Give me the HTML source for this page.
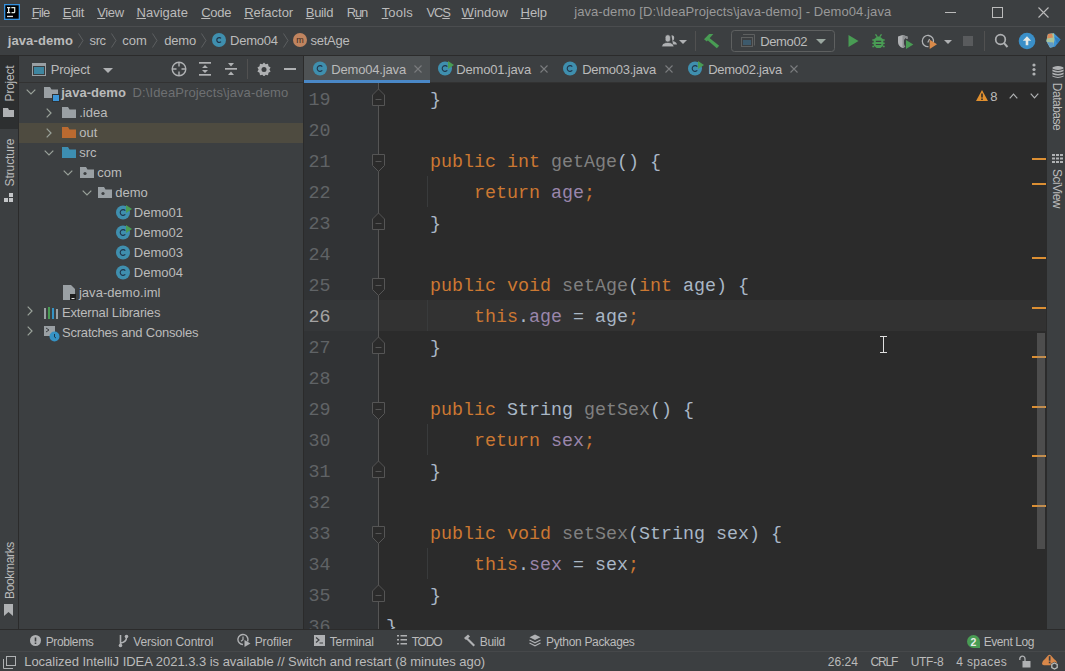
<!DOCTYPE html>
<html><head><meta charset="utf-8">
<style>
*{margin:0;padding:0;box-sizing:border-box}
html,body{width:1065px;height:671px;overflow:hidden;background:#3c3f41;font-family:"Liberation Sans",sans-serif;font-size:13px;color:#bbbbbb;position:relative}
.a{position:absolute;white-space:pre}
.r{position:absolute;display:block}
.mono{font-family:"Liberation Mono",monospace}
u{text-decoration:underline;text-decoration-thickness:1px;text-underline-offset:1px}
</style></head><body>
<div class="r" style="left:0px;top:0px;width:1065px;height:26px;background:#3c3f41;"></div>
<div class="r" style="left:0px;top:26px;width:1065px;height:1px;background:#4b4d4f;"></div>
<div class="r" style="left:0px;top:27px;width:1065px;height:28px;background:#3c3f41;"></div>
<div class="r" style="left:0px;top:55px;width:1065px;height:1px;background:#2b2b2b;"></div>
<div class="r" style="left:0px;top:56px;width:18px;height:573px;background:#3c3f41;"></div>
<div class="r" style="left:0px;top:56px;width:18px;height:73px;background:#2d2f30;"></div>
<div class="r" style="left:18px;top:56px;width:1px;height:573px;background:#2b2b2b;"></div>
<div class="r" style="left:19px;top:56px;width:284px;height:573px;background:#3c3f41;"></div>
<div class="r" style="left:19px;top:82px;width:284px;height:1px;background:#323232;"></div>
<div class="r" style="left:303px;top:56px;width:1px;height:573px;background:#2b2b2b;"></div>
<div class="r" style="left:304px;top:56px;width:742px;height:27px;background:#3c3f41;"></div>
<div class="r" style="left:304px;top:56px;width:126px;height:24px;background:#4e5254;"></div>
<div class="r" style="left:304px;top:80px;width:126px;height:3px;background:#4a88c7;"></div>
<div class="r" style="left:430px;top:82px;width:616px;height:1px;background:#323232;"></div>
<div class="r" style="left:304px;top:83px;width:742px;height:546px;background:#2b2b2b;"></div>
<div class="r" style="left:304px;top:83px;width:74px;height:546px;background:#313335;"></div>
<div class="r" style="left:1046px;top:56px;width:19px;height:573px;background:#3c3f41;"></div>
<div class="r" style="left:1046px;top:56px;width:1px;height:573px;background:#2b2b2b;"></div>
<div class="r" style="left:0px;top:629px;width:1065px;height:1px;background:#2b2b2b;"></div>
<div class="r" style="left:0px;top:630px;width:1065px;height:21px;background:#3c3f41;"></div>
<div class="r" style="left:0px;top:651px;width:1065px;height:1px;background:#46484a;"></div>
<div class="r" style="left:0px;top:652px;width:1065px;height:19px;background:#3c3f41;"></div>
<svg class="r" style="left:4px;top:4px;" width="16" height="16" viewBox="0 0 16 16"><rect x="0.65" y="0.65" width="14.7" height="14.7" fill="#000" stroke="#3592e0" stroke-width="1.3"/><path d="M3 3 H6.3 V4.2 H5.3 V8 H6.3 V9.2 H3 V8 H4 V4.2 H3Z" fill="#e8ece8"/><path d="M7.3 3 H11.3 V8 Q11.3 9.2 10 9.2 H7.5 V8 H9.8 Q10.1 8 10.1 7.6 V4.2 H7.3Z" fill="#dfe8df"/><rect x="3" y="11.8" width="6" height="1.3" fill="#e0e0e0"/></svg>
<div class="a" style="left:31.70px;top:4.00px;font-size:13px;line-height:17px;color:#bbbbbb;letter-spacing:-0.816px;"><u>F</u>ile</div>
<div class="a" style="left:62.70px;top:4.00px;font-size:13px;line-height:17px;color:#bbbbbb;letter-spacing:-0.234px;"><u>E</u>dit</div>
<div class="a" style="left:97.20px;top:4.00px;font-size:13px;line-height:17px;color:#bbbbbb;letter-spacing:-0.347px;"><u>V</u>iew</div>
<div class="a" style="left:136.50px;top:4.00px;font-size:13px;line-height:17px;color:#bbbbbb;letter-spacing:0.013px;"><u>N</u>avigate</div>
<div class="a" style="left:201.20px;top:4.00px;font-size:13px;line-height:17px;color:#bbbbbb;letter-spacing:-0.226px;"><u>C</u>ode</div>
<div class="a" style="left:244.20px;top:4.00px;font-size:13px;line-height:17px;color:#bbbbbb;letter-spacing:-0.019px;"><u>R</u>efactor</div>
<div class="a" style="left:305.80px;top:4.00px;font-size:13px;line-height:17px;color:#bbbbbb;letter-spacing:-0.327px;"><u>B</u>uild</div>
<div class="a" style="left:346.80px;top:4.00px;font-size:13px;line-height:17px;color:#bbbbbb;letter-spacing:-1.200px;">R<u>u</u>n</div>
<div class="a" style="left:381.70px;top:4.00px;font-size:13px;line-height:17px;color:#bbbbbb;letter-spacing:0.163px;"><u>T</u>ools</div>
<div class="a" style="left:426.60px;top:4.00px;font-size:13px;line-height:17px;color:#bbbbbb;letter-spacing:-1.200px;">VC<u>S</u></div>
<div class="a" style="left:461.60px;top:4.00px;font-size:13px;line-height:17px;color:#bbbbbb;letter-spacing:0.013px;"><u>W</u>indow</div>
<div class="a" style="left:520.60px;top:4.00px;font-size:13px;line-height:17px;color:#bbbbbb;letter-spacing:-0.112px;"><u>H</u>elp</div>
<div class="a" style="left:574.20px;top:2.50px;font-size:13px;line-height:17px;color:#999999;letter-spacing:0.083px;">java-demo [D:\IdeaProjects\java-demo] - Demo04.java</div>
<div class="r" style="left:945px;top:12px;width:11px;height:1px;background:#bbbbbb;"></div>
<svg class="r" style="left:991px;top:6px;" width="12" height="12" viewBox="0 0 12 12"><rect x="1.5" y="1.5" width="10" height="10" fill="none" stroke="#bbbbbb" stroke-width="1"/></svg>
<svg class="r" style="left:1037px;top:6px;" width="13" height="13" viewBox="0 0 13 13"><path d="M1.5 1.5 L11.5 11.5 M11.5 1.5 L1.5 11.5" stroke="#bbbbbb" stroke-width="1.1"/></svg>
<div class="a" style="left:7.70px;top:32.00px;font-size:13px;line-height:17px;color:#bbbbbb;letter-spacing:0.113px;font-weight:bold;">java-demo</div>
<div class="a" style="left:89.60px;top:32.00px;font-size:13px;line-height:17px;color:#bbbbbb;letter-spacing:-0.464px;">src</div>
<div class="a" style="left:122.20px;top:32.00px;font-size:13px;line-height:17px;color:#bbbbbb;letter-spacing:0.071px;">com</div>
<div class="a" style="left:164.20px;top:32.00px;font-size:13px;line-height:17px;color:#bbbbbb;letter-spacing:-0.173px;">demo</div>
<div class="a" style="left:230.00px;top:32.00px;font-size:13px;line-height:17px;color:#bbbbbb;letter-spacing:-0.207px;">Demo04</div>
<div class="a" style="left:310.40px;top:32.00px;font-size:13px;line-height:17px;color:#bbbbbb;letter-spacing:-0.234px;">setAge</div>
<svg class="r" style="left:78px;top:33px;" width="6" height="15" viewBox="0 0 6 15"><path d="M0.5 0.5 L5 7.5 L0.5 14.5" fill="none" stroke="#5d5f61" stroke-width="1"/></svg>
<svg class="r" style="left:111px;top:33px;" width="6" height="15" viewBox="0 0 6 15"><path d="M0.5 0.5 L5 7.5 L0.5 14.5" fill="none" stroke="#5d5f61" stroke-width="1"/></svg>
<svg class="r" style="left:152px;top:33px;" width="6" height="15" viewBox="0 0 6 15"><path d="M0.5 0.5 L5 7.5 L0.5 14.5" fill="none" stroke="#5d5f61" stroke-width="1"/></svg>
<svg class="r" style="left:201px;top:33px;" width="6" height="15" viewBox="0 0 6 15"><path d="M0.5 0.5 L5 7.5 L0.5 14.5" fill="none" stroke="#5d5f61" stroke-width="1"/></svg>
<svg class="r" style="left:283px;top:33px;" width="6" height="15" viewBox="0 0 6 15"><path d="M0.5 0.5 L5 7.5 L0.5 14.5" fill="none" stroke="#5d5f61" stroke-width="1"/></svg>
<svg class="r" style="left:212px;top:33px;" width="14" height="14" viewBox="0 0 14 14"><circle cx="7" cy="7" r="7" fill="#3f8fae"/><path d="M9 5.4 A2.4 2.4 0 1 0 9 8.6" fill="none" stroke="#1f3349" stroke-width="1.2"/></svg>
<svg class="r" style="left:293px;top:33px;" width="14" height="14" viewBox="0 0 14 14"><circle cx="7" cy="7" r="7" fill="#c0845f"/><text x="7" y="10" text-anchor="middle" font-family="Liberation Sans" font-size="9" fill="#3a2a20">m</text></svg>
<svg class="r" style="left:661px;top:34px;" width="17" height="14" viewBox="0 0 17 14"><path d="M10.5 1.2 Q13.2 1 13.2 4 Q13.2 6.5 11.5 7 Q15.5 7.5 16 10.5 L12 10.5Z" fill="#afb1b3"/><rect x="4.2" y="0.8" width="5.2" height="7.2" rx="2.5" fill="#afb1b3" stroke="#3c3f41" stroke-width="0.6"/><path d="M0.8 12.8 Q0.8 8.6 6.8 8.4 Q12.8 8.6 12.8 12.8Z" fill="#afb1b3" stroke="#3c3f41" stroke-width="0.6"/></svg>
<svg class="r" style="left:679px;top:40px;" width="8" height="4" viewBox="0 0 8 4"><path d="M0 0 L8 0 L4 4Z" fill="#afb1b3"/></svg>
<div class="r" style="left:695px;top:31px;width:1px;height:20px;background:#515151;"></div>
<svg class="r" style="left:704px;top:33px;" width="16" height="16" viewBox="0 0 16 16"><path d="M0 6.3 L5.2 1 L9.3 1 L2.8 8.5Z" fill="#499c54"/><path d="M4.5 4.3 L15.2 12.8 L12.8 15.3 L2.8 6.5Z" fill="#499c54"/></svg>
<svg class="r" style="left:731px;top:30px;" width="104" height="22" viewBox="0 0 104 22"><rect x="0.5" y="0.5" width="103" height="21" rx="3" fill="none" stroke="#5e6060"/></svg>
<svg class="r" style="left:740px;top:33px;" width="16" height="15" viewBox="0 0 16 15"><path d="M3 1.5 H14.5 V12.5" fill="none" stroke="#5e6060" stroke-width="1"/><rect x="1.5" y="4.5" width="11" height="9" fill="none" stroke="#5e6060" stroke-width="1"/><rect x="3" y="7" width="8" height="5" fill="#3d5a6c"/></svg>
<div class="a" style="left:760.20px;top:33.00px;font-size:13px;line-height:17px;color:#bbbbbb;letter-spacing:-0.347px;">Demo02</div>
<svg class="r" style="left:816px;top:39px;" width="10" height="5" viewBox="0 0 10 5"><path d="M0 0 L10 0 L5 5Z" fill="#9aa7a0"/></svg>
<svg class="r" style="left:848px;top:35px;" width="11" height="12" viewBox="0 0 11 12"><path d="M0.5 0 L10.5 6 L0.5 12Z" fill="#499c54"/></svg>
<svg class="r" style="left:872px;top:34px;" width="14" height="15" viewBox="0 0 14 15"><path d="M3.5 0.3 L5.3 2.8 M9.5 0.3 L7.7 2.8" stroke="#499c54" stroke-width="1.3"/><path d="M4 3.5 Q6.5 1.5 9 3.5 L11.3 5.5 L11.3 11.5 L8.5 14 L4.5 14 L1.7 11.5 L1.7 5.5Z" fill="#499c54"/><path d="M0.3 6 H2 M11 6 H12.7 M0.3 9.3 H2 M11 9.3 H12.7 M0.3 12.5 H2.2 M10.8 12.5 H12.7" stroke="#499c54" stroke-width="1.4"/><path d="M3.8 7.3 H9.2 M3.8 10.5 H9.2" stroke="#3c3f41" stroke-width="1.2"/></svg>
<svg class="r" style="left:897px;top:35px;" width="17" height="15" viewBox="0 0 17 15"><path d="M1 1.5 L5.5 0 L10.5 1.5 L10.5 4 L8.3 3 Q7 3.6 7 5.5 L7 9 Q7 11 8.3 11.5 Q7 12.5 5.5 13 Q1 11 1 7Z" fill="#afb1b3"/><path d="M5.5 0 L10.5 1.5 L10.5 4 L8.3 3 Q7 3.6 7 5.5 L7 9 Q7 11 8.3 11.5 Q7 12.5 5.5 13Z" fill="#8c8f91"/><path d="M9 5 L16.3 9.5 L9 14Z" fill="#499c54"/></svg>
<svg class="r" style="left:921px;top:34px;" width="17" height="16" viewBox="0 0 17 16"><path d="M12.3 8.5 A5.6 5.6 0 1 0 7.5 12.6" fill="none" stroke="#afb1b3" stroke-width="1.3"/><path d="M6.8 8.6 L8.6 5" fill="none" stroke="#afb1b3" stroke-width="1.2"/><path d="M8.7 5.8 L16 10.3 L8.7 15Z" fill="#d98a4a"/></svg>
<svg class="r" style="left:944px;top:40px;" width="8" height="4" viewBox="0 0 8 4"><path d="M0 0 L8 0 L4 4Z" fill="#afb1b3"/></svg>
<div class="r" style="left:963px;top:36px;width:10px;height:10px;background:#595b5d;"></div>
<div class="r" style="left:984px;top:31px;width:1px;height:20px;background:#515151;"></div>
<svg class="r" style="left:993px;top:33px;" width="16" height="16" viewBox="0 0 16 16"><circle cx="7.5" cy="6.5" r="4.8" fill="none" stroke="#afb1b3" stroke-width="1.7"/><path d="M10.8 9.8 L14.5 14" stroke="#afb1b3" stroke-width="2"/></svg>
<svg class="r" style="left:1018px;top:32px;" width="18" height="18" viewBox="0 0 18 18"><circle cx="9" cy="9" r="8.3" fill="#3a8fc8"/><path d="M9 4.3 L13.2 8.8 L10.3 8.8 L10.3 13.3 L7.7 13.3 L7.7 8.8 L4.8 8.8Z" fill="#e4e8e4"/></svg>
<svg class="r" style="left:1046px;top:33px;" width="15" height="16" viewBox="0 0 15 16"><path d="M2 1 L8 0.3 L14.5 6.5 L9 13.8 L4 14.5 L0.3 8Z" fill="#3d93d6"/><path d="M2 1 L8 0.3 L8.5 7 L7 13.9 L4 14.5 L0.3 8Z" fill="#a9c49a"/><path d="M2 1 L6 0.6 L7 4.5 L1 5.5Z" fill="#d98a5a"/><path d="M1 9 L7.5 9.5 L7 13.9 L4 14.5Z" fill="#5f9bc8"/><path d="M8.5 4 L14.5 6.5 L11 11Z" fill="#2f7fc0"/></svg>
<div class="a" style="left:-190.5px;top:75.50px;width:400px;text-align:center;font-size:12px;line-height:15px;color:#bbbbbb;letter-spacing:-0.225px;transform:rotate(-90deg);transform-origin:200px 7.5px">Project</div>
<svg class="r" style="left:3px;top:108px;" width="11" height="9" viewBox="0 0 11 9"><path d="M0 0 L5 0 L6 2 L11 2 L11 9 L0 9Z" fill="#afb1b3"/></svg>
<div class="a" style="left:-190.5px;top:154.50px;width:400px;text-align:center;font-size:12px;line-height:15px;color:#bbbbbb;letter-spacing:-0.086px;transform:rotate(-90deg);transform-origin:200px 7.5px">Structure</div>
<svg class="r" style="left:4px;top:193px;" width="10" height="10" viewBox="0 0 10 10"><rect x="5" y="0" width="4" height="4" fill="#c4c6c8"/><rect x="0" y="5" width="4" height="4" fill="#c4c6c8"/><rect x="5" y="5" width="4" height="4" fill="#c4c6c8"/></svg>
<div class="a" style="left:-190.5px;top:562.65px;width:400px;text-align:center;font-size:12px;line-height:15px;color:#bbbbbb;letter-spacing:-0.340px;transform:rotate(-90deg);transform-origin:200px 7.5px">Bookmarks</div>
<svg class="r" style="left:4px;top:604px;" width="10" height="12" viewBox="0 0 10 12"><path d="M0 0 L9 0 L9 12 L4.5 8 L0 12Z" fill="#afb1b3"/></svg>
<svg class="r" style="left:32px;top:63px;" width="15" height="14" viewBox="0 0 15 14"><rect x="0.5" y="0.5" width="13" height="12" fill="none" stroke="#9aa0a4"/><rect x="0" y="0" width="14" height="3" fill="#9aa0a4"/><rect x="2" y="4" width="10" height="7" fill="#3e86a0"/></svg>
<div class="a" style="left:50.70px;top:60.70px;font-size:13px;line-height:17px;color:#bbbbbb;letter-spacing:-0.177px;">Project</div>
<svg class="r" style="left:103px;top:68px;" width="10" height="5" viewBox="0 0 10 5"><path d="M0 0 L10 0 L5 5Z" fill="#afb1b3"/></svg>
<svg class="r" style="left:171px;top:61px;" width="16" height="16" viewBox="0 0 16 16"><circle cx="8" cy="8" r="6.8" fill="none" stroke="#afb1b3" stroke-width="1.4"/><path d="M8 1 L8 5.5 M8 10.5 L8 15 M1 8 L5.5 8 M10.5 8 L15 8" stroke="#afb1b3" stroke-width="1.4"/></svg>
<svg class="r" style="left:199px;top:62px;" width="12" height="14" viewBox="0 0 12 14"><rect x="0" y="0" width="12" height="1.7" fill="#afb1b3"/><rect x="0" y="12" width="12" height="1.7" fill="#afb1b3"/><path d="M3 6 L6 3 L9 6Z M3 8 L9 8 L6 11Z" fill="#afb1b3"/></svg>
<svg class="r" style="left:225px;top:62px;" width="12" height="14" viewBox="0 0 12 14"><rect x="0" y="6" width="12" height="1.7" fill="#afb1b3"/><path d="M3 1 L9 1 L6 4.5Z M3 13 L6 9.5 L9 13Z" fill="#afb1b3"/></svg>
<div class="r" style="left:247px;top:59px;width:1px;height:20px;background:#515151;"></div>
<svg class="r" style="left:257px;top:62px;" width="14" height="14" viewBox="0 0 14 14"><path d="M7 0.5 L8.6 2.2 L11 1.7 L11.5 4.2 L13.6 5.5 L12.4 7.5 L13.6 9.5 L11.5 10.8 L11 13.3 L8.6 12.8 L7 14.5 L5.4 12.8 L3 13.3 L2.5 10.8 L0.4 9.5 L1.6 7.5 L0.4 5.5 L2.5 4.2 L3 1.7 L5.4 2.2Z" fill="#afb1b3"/><circle cx="7" cy="7.5" r="2.5" fill="#3c3f41"/></svg>
<div class="r" style="left:284px;top:68px;width:12px;height:2px;background:#afb1b3;"></div>
<div class="r" style="left:19px;top:123px;width:284px;height:20px;background:#4e4b40;"></div>
<svg class="r" style="left:26px;top:89px;" width="10" height="6" viewBox="0 0 10 6"><path d="M0.7 0.7 L5 5 L9.3 0.7" fill="none" stroke="#9aa29a" stroke-width="1.2"/></svg>
<svg class="r" style="left:44px;top:87px;" width="16" height="15" viewBox="0 0 16 15"><path d="M0 0 L6 0 L7.5 2.5 L14 2.5 L14 11 L0 11Z" fill="#9aa0a4"/><rect x="8.5" y="7.5" width="7" height="7" fill="#3d96d8" stroke="#2f3133" stroke-width="1"/></svg>
<div class="a" style="left:61.20px;top:84.00px;font-size:13px;line-height:17px;color:#bbbbbb;letter-spacing:0.050px;font-weight:bold;">java-demo</div>
<div class="a" style="left:132.60px;top:84.00px;font-size:13px;line-height:17px;color:#6e7072;letter-spacing:0.101px;">D:\IdeaProjects\java-demo</div>
<svg class="r" style="left:46px;top:108px;" width="6" height="10" viewBox="0 0 6 10"><path d="M0.7 0.7 L5 5 L0.7 9.3" fill="none" stroke="#9aa29a" stroke-width="1.2"/></svg>
<svg class="r" style="left:62px;top:107px;" width="14" height="11" viewBox="0 0 14 11"><path d="M0 0 L6 0 L7.5 2.5 L14 2.5 L14 11 L0 11Z" fill="#9aa0a4"/></svg>
<div class="a" style="left:79.20px;top:104.00px;font-size:13px;line-height:17px;color:#bbbbbb;letter-spacing:0.000px;">.idea</div>
<svg class="r" style="left:46px;top:128px;" width="6" height="10" viewBox="0 0 6 10"><path d="M0.7 0.7 L5 5 L0.7 9.3" fill="none" stroke="#9aa29a" stroke-width="1.2"/></svg>
<svg class="r" style="left:62px;top:127px;" width="14" height="11" viewBox="0 0 14 11"><path d="M0 0 L6 0 L7.5 2.5 L14 2.5 L14 11 L0 11Z" fill="#bb6a30"/></svg>
<div class="a" style="left:79.20px;top:124.00px;font-size:13px;line-height:17px;color:#bbbbbb;letter-spacing:0.000px;">out</div>
<svg class="r" style="left:44px;top:150px;" width="10" height="6" viewBox="0 0 10 6"><path d="M0.7 0.7 L5 5 L9.3 0.7" fill="none" stroke="#9aa29a" stroke-width="1.2"/></svg>
<svg class="r" style="left:62px;top:147px;" width="14" height="11" viewBox="0 0 14 11"><path d="M0 0 L6 0 L7.5 2.5 L14 2.5 L14 11 L0 11Z" fill="#3d8eb1"/></svg>
<div class="a" style="left:79.20px;top:144.00px;font-size:13px;line-height:17px;color:#bbbbbb;letter-spacing:0.000px;">src</div>
<svg class="r" style="left:63px;top:170px;" width="10" height="6" viewBox="0 0 10 6"><path d="M0.7 0.7 L5 5 L9.3 0.7" fill="none" stroke="#9aa29a" stroke-width="1.2"/></svg>
<svg class="r" style="left:80px;top:167px;" width="14" height="11" viewBox="0 0 14 11"><path d="M0 0 L6 0 L7.5 2.5 L14 2.5 L14 11 L0 11Z" fill="#9aa0a4"/><circle cx="5" cy="6.5" r="1.6" fill="#3c3f41"/></svg>
<div class="a" style="left:97.20px;top:164.00px;font-size:13px;line-height:17px;color:#bbbbbb;letter-spacing:0.000px;">com</div>
<svg class="r" style="left:82px;top:190px;" width="10" height="6" viewBox="0 0 10 6"><path d="M0.7 0.7 L5 5 L9.3 0.7" fill="none" stroke="#9aa29a" stroke-width="1.2"/></svg>
<svg class="r" style="left:98px;top:187px;" width="14" height="11" viewBox="0 0 14 11"><path d="M0 0 L6 0 L7.5 2.5 L14 2.5 L14 11 L0 11Z" fill="#9aa0a4"/><circle cx="5" cy="6.5" r="1.6" fill="#3c3f41"/></svg>
<div class="a" style="left:115.20px;top:184.00px;font-size:13px;line-height:17px;color:#bbbbbb;letter-spacing:0.000px;">demo</div>
<svg class="r" style="left:116px;top:205px;" width="16" height="15" viewBox="0 0 16 15"><circle cx="7" cy="7.5" r="7" fill="#3f8fae"/><path d="M9.3 5.6 A2.9 2.9 0 1 0 9.3 9.4" fill="none" stroke="#1f3349" stroke-width="1.1"/><path d="M10 0 L16 4 L10 8Z" fill="#499c54"/></svg>
<div class="a" style="left:133.80px;top:204.00px;font-size:13px;line-height:17px;color:#bbbbbb;letter-spacing:0.000px;">Demo01</div>
<svg class="r" style="left:116px;top:225px;" width="16" height="15" viewBox="0 0 16 15"><circle cx="7" cy="7.5" r="7" fill="#3f8fae"/><path d="M9.3 5.6 A2.9 2.9 0 1 0 9.3 9.4" fill="none" stroke="#1f3349" stroke-width="1.1"/><path d="M10 0 L16 4 L10 8Z" fill="#499c54"/></svg>
<div class="a" style="left:133.80px;top:224.00px;font-size:13px;line-height:17px;color:#bbbbbb;letter-spacing:0.000px;">Demo02</div>
<svg class="r" style="left:116px;top:245px;" width="16" height="15" viewBox="0 0 16 15"><circle cx="7" cy="7.5" r="7" fill="#3f8fae"/><path d="M9.3 5.6 A2.9 2.9 0 1 0 9.3 9.4" fill="none" stroke="#1f3349" stroke-width="1.1"/></svg>
<div class="a" style="left:133.80px;top:244.00px;font-size:13px;line-height:17px;color:#bbbbbb;letter-spacing:0.000px;">Demo03</div>
<svg class="r" style="left:116px;top:265px;" width="16" height="15" viewBox="0 0 16 15"><circle cx="7" cy="7.5" r="7" fill="#3f8fae"/><path d="M9.3 5.6 A2.9 2.9 0 1 0 9.3 9.4" fill="none" stroke="#1f3349" stroke-width="1.1"/></svg>
<div class="a" style="left:133.80px;top:264.00px;font-size:13px;line-height:17px;color:#bbbbbb;letter-spacing:0.000px;">Demo04</div>
<svg class="r" style="left:63px;top:285px;" width="14" height="16" viewBox="0 0 14 16"><path d="M0 0 L8 0 L12 4 L12 15 L0 15Z" fill="#9aa0a4"/><rect x="7" y="9" width="6" height="6" fill="#1e1e1e"/><rect x="8.5" y="13" width="3" height="1" fill="#ddd"/></svg>
<div class="a" style="left:78.90px;top:284.00px;font-size:13px;line-height:17px;color:#bbbbbb;letter-spacing:0.049px;">java-demo.iml</div>
<svg class="r" style="left:27px;top:306px;" width="6" height="10" viewBox="0 0 6 10"><path d="M0.7 0.7 L5 5 L0.7 9.3" fill="none" stroke="#9aa29a" stroke-width="1.2"/></svg>
<svg class="r" style="left:44px;top:307px;" width="15" height="12" viewBox="0 0 15 12"><rect x="0" y="1" width="2" height="11" fill="#9aa0a4"/><rect x="4" y="0" width="2" height="12" fill="#499c54"/><rect x="8" y="1" width="2" height="11" fill="#3592c4"/><rect x="12" y="2" width="2" height="10" fill="#9aa0a4"/></svg>
<div class="a" style="left:62.00px;top:304.00px;font-size:13px;line-height:17px;color:#bbbbbb;letter-spacing:-0.162px;">External Libraries</div>
<svg class="r" style="left:27px;top:326px;" width="6" height="10" viewBox="0 0 6 10"><path d="M0.7 0.7 L5 5 L0.7 9.3" fill="none" stroke="#9aa29a" stroke-width="1.2"/></svg>
<svg class="r" style="left:44px;top:326px;" width="16" height="16" viewBox="0 0 16 16"><rect x="0" y="0" width="11" height="10" fill="#9aa0a4"/><path d="M2 2 L5 4 L2 6" fill="none" stroke="#3c3f41" stroke-width="1"/><circle cx="10.5" cy="10.5" r="5" fill="#3592c4"/><path d="M10.5 8 L10.5 11 L12 12" fill="none" stroke="#1c3a50" stroke-width="1"/></svg>
<div class="a" style="left:62.00px;top:324.00px;font-size:13px;line-height:17px;color:#bbbbbb;letter-spacing:-0.210px;">Scratches and Consoles</div>
<svg class="r" style="left:313px;top:61px;" width="16" height="15" viewBox="0 0 16 15"><circle cx="7" cy="7.5" r="7" fill="#3f8fae"/><path d="M9.3 5.6 A2.9 2.9 0 1 0 9.3 9.4" fill="none" stroke="#1f3349" stroke-width="1.1"/></svg>
<div class="a" style="left:331.20px;top:61.00px;font-size:13px;line-height:17px;color:#bbbbbb;letter-spacing:-0.160px;">Demo04.java</div>
<svg class="r" style="left:414px;top:65px;" width="8" height="8" viewBox="0 0 8 8"><path d="M0.5 0.5 L7.5 7.5 M7.5 0.5 L0.5 7.5" stroke="#7a7c7e" stroke-width="1.1"/></svg>
<svg class="r" style="left:438px;top:61px;" width="16" height="15" viewBox="0 0 16 15"><circle cx="7" cy="7.5" r="7" fill="#3f8fae"/><path d="M9.3 5.6 A2.9 2.9 0 1 0 9.3 9.4" fill="none" stroke="#1f3349" stroke-width="1.1"/><path d="M10 0 L16 4 L10 8Z" fill="#499c54"/></svg>
<div class="a" style="left:456.20px;top:61.00px;font-size:13px;line-height:17px;color:#bbbbbb;letter-spacing:-0.160px;">Demo01.java</div>
<svg class="r" style="left:540px;top:65px;" width="8" height="8" viewBox="0 0 8 8"><path d="M0.5 0.5 L7.5 7.5 M7.5 0.5 L0.5 7.5" stroke="#7a7c7e" stroke-width="1.1"/></svg>
<svg class="r" style="left:563px;top:61px;" width="16" height="15" viewBox="0 0 16 15"><circle cx="7" cy="7.5" r="7" fill="#3f8fae"/><path d="M9.3 5.6 A2.9 2.9 0 1 0 9.3 9.4" fill="none" stroke="#1f3349" stroke-width="1.1"/></svg>
<div class="a" style="left:582.20px;top:61.00px;font-size:13px;line-height:17px;color:#bbbbbb;letter-spacing:-0.260px;">Demo03.java</div>
<svg class="r" style="left:665px;top:65px;" width="8" height="8" viewBox="0 0 8 8"><path d="M0.5 0.5 L7.5 7.5 M7.5 0.5 L0.5 7.5" stroke="#7a7c7e" stroke-width="1.1"/></svg>
<svg class="r" style="left:688px;top:61px;" width="16" height="15" viewBox="0 0 16 15"><circle cx="7" cy="7.5" r="7" fill="#3f8fae"/><path d="M9.3 5.6 A2.9 2.9 0 1 0 9.3 9.4" fill="none" stroke="#1f3349" stroke-width="1.1"/><path d="M10 0 L16 4 L10 8Z" fill="#499c54"/></svg>
<div class="a" style="left:708.20px;top:61.00px;font-size:13px;line-height:17px;color:#bbbbbb;letter-spacing:-0.260px;">Demo02.java</div>
<svg class="r" style="left:790px;top:65px;" width="8" height="8" viewBox="0 0 8 8"><path d="M0.5 0.5 L7.5 7.5 M7.5 0.5 L0.5 7.5" stroke="#7a7c7e" stroke-width="1.1"/></svg>
<svg class="r" style="left:1032px;top:63px;" width="4" height="13" viewBox="0 0 4 13"><circle cx="2" cy="2" r="1.6" fill="#afb1b3"/><circle cx="2" cy="6.5" r="1.6" fill="#afb1b3"/><circle cx="2" cy="11" r="1.6" fill="#afb1b3"/></svg>
<div class="r" style="left:304px;top:300px;width:74px;height:31px;background:#353739;"></div>
<div class="r" style="left:379px;top:300px;width:667px;height:31px;background:#323232;"></div>
<div class="r" style="left:378px;top:83px;width:1px;height:546px;background:#555555;"></div>
<div class="r" style="left:427px;top:176px;width:1px;height:31px;background:#393b3c;"></div>
<div class="r" style="left:427px;top:300px;width:1px;height:31px;background:#393b3c;"></div>
<div class="r" style="left:427px;top:424px;width:1px;height:31px;background:#393b3c;"></div>
<div class="r" style="left:427px;top:548px;width:1px;height:31px;background:#393b3c;"></div>
<div style="position:absolute;left:0;top:0;width:1046px;height:629px;overflow:hidden">
<div class="a mono" style="left:308.5px;top:83px;height:31px;font-size:18.33px;line-height:31px;color:#606366;padding-top:1.6px">19</div>
<div class="a mono" style="left:386px;top:83px;height:31px;font-size:18.33px;line-height:31px;color:#a9b7c6;padding-top:1.6px">    }</div>
<div class="a mono" style="left:308.5px;top:114px;height:31px;font-size:18.33px;line-height:31px;color:#606366;padding-top:1.6px">20</div>
<div class="a mono" style="left:308.5px;top:145px;height:31px;font-size:18.33px;line-height:31px;color:#606366;padding-top:1.6px">21</div>
<div class="a mono" style="left:386px;top:145px;height:31px;font-size:18.33px;line-height:31px;color:#a9b7c6;padding-top:1.6px">    <span style="color:#cc7832">public</span> <span style="color:#cc7832">int</span> <span style="color:#808080">getAge</span>() {</div>
<div class="a mono" style="left:308.5px;top:176px;height:31px;font-size:18.33px;line-height:31px;color:#606366;padding-top:1.6px">22</div>
<div class="a mono" style="left:386px;top:176px;height:31px;font-size:18.33px;line-height:31px;color:#a9b7c6;padding-top:1.6px">        <span style="color:#cc7832">return</span> <span style="color:#9a86ab">age</span><span style="color:#cc7832">;</span></div>
<div class="a mono" style="left:308.5px;top:207px;height:31px;font-size:18.33px;line-height:31px;color:#606366;padding-top:1.6px">23</div>
<div class="a mono" style="left:386px;top:207px;height:31px;font-size:18.33px;line-height:31px;color:#a9b7c6;padding-top:1.6px">    }</div>
<div class="a mono" style="left:308.5px;top:238px;height:31px;font-size:18.33px;line-height:31px;color:#606366;padding-top:1.6px">24</div>
<div class="a mono" style="left:308.5px;top:269px;height:31px;font-size:18.33px;line-height:31px;color:#606366;padding-top:1.6px">25</div>
<div class="a mono" style="left:386px;top:269px;height:31px;font-size:18.33px;line-height:31px;color:#a9b7c6;padding-top:1.6px">    <span style="color:#cc7832">public</span> <span style="color:#cc7832">void</span> <span style="color:#808080">setAge</span>(<span style="color:#cc7832">int</span> age) {</div>
<div class="a mono" style="left:308.5px;top:300px;height:31px;font-size:18.33px;line-height:31px;color:#a4a3a3;padding-top:1.6px">26</div>
<div class="a mono" style="left:386px;top:300px;height:31px;font-size:18.33px;line-height:31px;color:#a9b7c6;padding-top:1.6px">        <span style="color:#cc7832">this</span>.<span style="color:#9a86ab">age</span> = age<span style="color:#cc7832">;</span></div>
<div class="a mono" style="left:308.5px;top:331px;height:31px;font-size:18.33px;line-height:31px;color:#606366;padding-top:1.6px">27</div>
<div class="a mono" style="left:386px;top:331px;height:31px;font-size:18.33px;line-height:31px;color:#a9b7c6;padding-top:1.6px">    }</div>
<div class="a mono" style="left:308.5px;top:362px;height:31px;font-size:18.33px;line-height:31px;color:#606366;padding-top:1.6px">28</div>
<div class="a mono" style="left:308.5px;top:393px;height:31px;font-size:18.33px;line-height:31px;color:#606366;padding-top:1.6px">29</div>
<div class="a mono" style="left:386px;top:393px;height:31px;font-size:18.33px;line-height:31px;color:#a9b7c6;padding-top:1.6px">    <span style="color:#cc7832">public</span> String <span style="color:#808080">getSex</span>() {</div>
<div class="a mono" style="left:308.5px;top:424px;height:31px;font-size:18.33px;line-height:31px;color:#606366;padding-top:1.6px">30</div>
<div class="a mono" style="left:386px;top:424px;height:31px;font-size:18.33px;line-height:31px;color:#a9b7c6;padding-top:1.6px">        <span style="color:#cc7832">return</span> <span style="color:#9a86ab">sex</span><span style="color:#cc7832">;</span></div>
<div class="a mono" style="left:308.5px;top:455px;height:31px;font-size:18.33px;line-height:31px;color:#606366;padding-top:1.6px">31</div>
<div class="a mono" style="left:386px;top:455px;height:31px;font-size:18.33px;line-height:31px;color:#a9b7c6;padding-top:1.6px">    }</div>
<div class="a mono" style="left:308.5px;top:486px;height:31px;font-size:18.33px;line-height:31px;color:#606366;padding-top:1.6px">32</div>
<div class="a mono" style="left:308.5px;top:517px;height:31px;font-size:18.33px;line-height:31px;color:#606366;padding-top:1.6px">33</div>
<div class="a mono" style="left:386px;top:517px;height:31px;font-size:18.33px;line-height:31px;color:#a9b7c6;padding-top:1.6px">    <span style="color:#cc7832">public</span> <span style="color:#cc7832">void</span> <span style="color:#808080">setSex</span>(String sex) {</div>
<div class="a mono" style="left:308.5px;top:548px;height:31px;font-size:18.33px;line-height:31px;color:#606366;padding-top:1.6px">34</div>
<div class="a mono" style="left:386px;top:548px;height:31px;font-size:18.33px;line-height:31px;color:#a9b7c6;padding-top:1.6px">        <span style="color:#cc7832">this</span>.<span style="color:#9a86ab">sex</span> = sex<span style="color:#cc7832">;</span></div>
<div class="a mono" style="left:308.5px;top:579px;height:31px;font-size:18.33px;line-height:31px;color:#606366;padding-top:1.6px">35</div>
<div class="a mono" style="left:386px;top:579px;height:31px;font-size:18.33px;line-height:31px;color:#a9b7c6;padding-top:1.6px">    }</div>
<div class="a mono" style="left:308.5px;top:610px;height:31px;font-size:18.33px;line-height:31px;color:#606366;padding-top:1.6px">36</div>
<div class="a mono" style="left:386px;top:610px;height:31px;font-size:18.33px;line-height:31px;color:#a9b7c6;padding-top:1.6px">}</div>
</div>
<svg class="r" style="left:372px;top:88px;" width="13" height="19" viewBox="0 0 13 19"><path d="M0.5 17.5 L0.5 7 L6.5 1 L12.5 7 L12.5 17.5Z" fill="#2b2b2b" stroke="#555555" stroke-width="1"/><rect x="3.5" y="11" width="6" height="1" fill="#555555"/></svg>
<svg class="r" style="left:372px;top:212px;" width="13" height="19" viewBox="0 0 13 19"><path d="M0.5 17.5 L0.5 7 L6.5 1 L12.5 7 L12.5 17.5Z" fill="#2b2b2b" stroke="#555555" stroke-width="1"/><rect x="3.5" y="11" width="6" height="1" fill="#555555"/></svg>
<svg class="r" style="left:372px;top:336px;" width="13" height="19" viewBox="0 0 13 19"><path d="M0.5 17.5 L0.5 7 L6.5 1 L12.5 7 L12.5 17.5Z" fill="#2b2b2b" stroke="#555555" stroke-width="1"/><rect x="3.5" y="11" width="6" height="1" fill="#555555"/></svg>
<svg class="r" style="left:372px;top:460px;" width="13" height="19" viewBox="0 0 13 19"><path d="M0.5 17.5 L0.5 7 L6.5 1 L12.5 7 L12.5 17.5Z" fill="#2b2b2b" stroke="#555555" stroke-width="1"/><rect x="3.5" y="11" width="6" height="1" fill="#555555"/></svg>
<svg class="r" style="left:372px;top:584px;" width="13" height="19" viewBox="0 0 13 19"><path d="M0.5 17.5 L0.5 7 L6.5 1 L12.5 7 L12.5 17.5Z" fill="#2b2b2b" stroke="#555555" stroke-width="1"/><rect x="3.5" y="11" width="6" height="1" fill="#555555"/></svg>
<svg class="r" style="left:372px;top:154px;" width="13" height="19" viewBox="0 0 13 19"><path d="M0.5 0.5 L12.5 0.5 L12.5 11.5 L6.5 17.5 L0.5 11.5Z" fill="#2b2b2b" stroke="#555555" stroke-width="1"/><rect x="3.5" y="7" width="6" height="1" fill="#555555"/></svg>
<svg class="r" style="left:372px;top:278px;" width="13" height="19" viewBox="0 0 13 19"><path d="M0.5 0.5 L12.5 0.5 L12.5 11.5 L6.5 17.5 L0.5 11.5Z" fill="#2b2b2b" stroke="#555555" stroke-width="1"/><rect x="3.5" y="7" width="6" height="1" fill="#555555"/></svg>
<svg class="r" style="left:372px;top:402px;" width="13" height="19" viewBox="0 0 13 19"><path d="M0.5 0.5 L12.5 0.5 L12.5 11.5 L6.5 17.5 L0.5 11.5Z" fill="#2b2b2b" stroke="#555555" stroke-width="1"/><rect x="3.5" y="7" width="6" height="1" fill="#555555"/></svg>
<svg class="r" style="left:372px;top:526px;" width="13" height="19" viewBox="0 0 13 19"><path d="M0.5 0.5 L12.5 0.5 L12.5 11.5 L6.5 17.5 L0.5 11.5Z" fill="#2b2b2b" stroke="#555555" stroke-width="1"/><rect x="3.5" y="7" width="6" height="1" fill="#555555"/></svg>
<svg class="r" style="left:976px;top:90px;" width="12" height="11" viewBox="0 0 12 11"><path d="M6 0 L12 11 L0 11Z" fill="#e08f2e"/><rect x="5.2" y="3.5" width="1.6" height="4" fill="#2b2b2b"/><rect x="5.2" y="8.5" width="1.6" height="1.5" fill="#2b2b2b"/></svg>
<div class="a" style="left:990.20px;top:88.00px;font-size:13px;line-height:17px;color:#bbbbbb;letter-spacing:0.000px;">8</div>
<svg class="r" style="left:1009px;top:93px;" width="9" height="6" viewBox="0 0 9 6"><path d="M0.7 5.3 L4.5 1.2 L8.3 5.3" fill="none" stroke="#afb1b3" stroke-width="1.2"/></svg>
<svg class="r" style="left:1030px;top:93px;" width="9" height="6" viewBox="0 0 9 6"><path d="M0.7 0.7 L4.5 4.8 L8.3 0.7" fill="none" stroke="#afb1b3" stroke-width="1.2"/></svg>
<div class="r" style="left:1032px;top:158px;width:14px;height:2px;background:#dc8f33;"></div>
<div class="r" style="left:1032px;top:183px;width:14px;height:2px;background:#dc8f33;"></div>
<div class="r" style="left:1032px;top:257px;width:14px;height:2px;background:#dc8f33;"></div>
<div class="r" style="left:1032px;top:307px;width:14px;height:2px;background:#dc8f33;"></div>
<div class="r" style="left:1032px;top:356px;width:14px;height:2px;background:#dc8f33;"></div>
<div class="r" style="left:1032px;top:406px;width:14px;height:2px;background:#dc8f33;"></div>
<div class="r" style="left:1032px;top:455px;width:14px;height:2px;background:#dc8f33;"></div>
<div class="r" style="left:1032px;top:505px;width:14px;height:2px;background:#dc8f33;"></div>
<div class="r" style="left:1037px;top:333px;width:8px;height:216px;background:rgba(140,140,140,0.35);"></div>
<svg class="r" style="left:879px;top:336px;" width="9" height="17" viewBox="0 0 9 17"><path d="M1 0.5 L8 0.5 M4.5 0.5 L4.5 16.5 M1 16.5 L8 16.5" stroke="#e0e0e0" stroke-width="1"/></svg>
<svg class="r" style="left:1052px;top:66px;" width="12" height="13" viewBox="0 0 12 13"><ellipse cx="6" cy="2" rx="5.6" ry="1.9" fill="#afb1b3"/><path d="M0.4 3.6 Q6 6.3 11.6 3.6 L11.6 5.2 Q6 7.9 0.4 5.2Z M0.4 6.6 Q6 9.3 11.6 6.6 L11.6 8.2 Q6 10.9 0.4 8.2Z M0.4 9.6 Q6 12.3 11.6 9.6 L11.6 10.6 Q6 13.3 0.4 10.6Z" fill="#afb1b3"/></svg>
<div class="a" style="left:856px;top:99.05px;width:400px;text-align:center;font-size:12px;line-height:15px;color:#bbbbbb;letter-spacing:-0.496px;transform:rotate(90deg);transform-origin:200px 7.5px">Database</div>
<svg class="r" style="left:1052px;top:154px;" width="11" height="9" viewBox="0 0 11 9"><path d="M0 0 H3 V2 H0Z M4 0 H7 V2 H4Z M8 0 H11 V2 H8Z M0 3.5 H3 V5.5 H0Z M4 3.5 H7 V5.5 H4Z M8 3.5 H11 V5.5 H8Z M0 7 H3 V9 H0Z M4 7 H7 V9 H4Z M8 7 H11 V9 H8Z" fill="#afb1b3"/></svg>
<div class="a" style="left:856px;top:180.75px;width:400px;text-align:center;font-size:12px;line-height:15px;color:#bbbbbb;letter-spacing:-0.494px;transform:rotate(90deg);transform-origin:200px 7.5px">SciView</div>
<svg class="r" style="left:30px;top:635px;" width="11" height="11" viewBox="0 0 11 11"><circle cx="5.5" cy="5.5" r="5.5" fill="#afb1b3"/><rect x="4.7" y="2.5" width="1.6" height="4" fill="#3c3f41"/><rect x="4.7" y="7.5" width="1.6" height="1.5" fill="#3c3f41"/></svg>
<div class="a" style="left:45.66px;top:633.84px;font-size:12px;line-height:16px;color:#bbbbbb;letter-spacing:-0.369px;">Problems</div>
<svg class="r" style="left:118px;top:634px;" width="11" height="14" viewBox="0 0 11 14"><path d="M2.5 1 L2.5 11" stroke="#afb1b3" stroke-width="1.6"/><circle cx="2.5" cy="11.5" r="1.8" fill="#afb1b3"/><circle cx="8.5" cy="2.5" r="1.8" fill="#afb1b3"/><path d="M8.5 3.5 Q8.5 8 2.5 9" fill="none" stroke="#afb1b3" stroke-width="1.5"/></svg>
<div class="a" style="left:133.26px;top:633.84px;font-size:12px;line-height:16px;color:#bbbbbb;letter-spacing:-0.132px;">Version Control</div>
<svg class="r" style="left:237px;top:633px;" width="14" height="15" viewBox="0 0 14 15"><path d="M10.5 8.5 A5 5 0 1 0 6 11.5" fill="none" stroke="#afb1b3" stroke-width="1.4"/><path d="M6 3.5 L6 6.8 L4 8.3" fill="none" stroke="#afb1b3" stroke-width="1.2"/><path d="M7.5 7 L13.5 10.5 L7.5 14Z" fill="#afb1b3"/></svg>
<div class="a" style="left:254.66px;top:633.84px;font-size:12px;line-height:16px;color:#bbbbbb;letter-spacing:-0.102px;">Profiler</div>
<svg class="r" style="left:314px;top:635px;" width="11" height="11" viewBox="0 0 11 11"><rect x="0" y="0" width="11" height="11" fill="#afb1b3"/><path d="M2 2.5 L5 5 L2 7.5 M5.5 8 L9 8" fill="none" stroke="#3c3f41" stroke-width="1.2"/></svg>
<div class="a" style="left:329.66px;top:633.84px;font-size:12px;line-height:16px;color:#bbbbbb;letter-spacing:-0.150px;">Terminal</div>
<svg class="r" style="left:397px;top:635px;" width="10" height="10" viewBox="0 0 10 10"><path d="M0 0.7 H2 M0 4.7 H2 M0 8.7 H2 M3.5 0.7 H10 M3.5 4.7 H10 M3.5 8.7 H10" stroke="#afb1b3" stroke-width="1.6"/></svg>
<div class="a" style="left:411.66px;top:633.84px;font-size:12px;line-height:16px;color:#bbbbbb;letter-spacing:-1.200px;">TODO</div>
<svg class="r" style="left:463px;top:634px;" width="13" height="13" viewBox="0 0 13 13"><path d="M1 4 L5 0.5 L7 2.5 L3 6Z" fill="#afb1b3"/><path d="M4.5 3.5 L12 11 L10.5 12.5 L3 5Z" fill="#afb1b3"/></svg>
<div class="a" style="left:479.76px;top:633.84px;font-size:12px;line-height:16px;color:#bbbbbb;letter-spacing:-0.296px;">Build</div>
<svg class="r" style="left:529px;top:634px;" width="12" height="13" viewBox="0 0 12 13"><path d="M6 0.5 L11.5 3.2 L6 6 L0.5 3.2Z" fill="#afb1b3"/><path d="M0.5 6 L6 8.8 L11.5 6 M0.5 9 L6 11.8 L11.5 9" fill="none" stroke="#afb1b3" stroke-width="1.2"/></svg>
<div class="a" style="left:545.96px;top:633.84px;font-size:12px;line-height:16px;color:#bbbbbb;letter-spacing:-0.321px;">Python Packages</div>
<svg class="r" style="left:967px;top:635px;" width="14" height="14" viewBox="0 0 14 14"><path d="M6.5 0 A6.5 6.5 0 1 0 6.5 13 L13 13 L13 6.5 A6.5 6.5 0 0 0 6.5 0Z" fill="#499c54"/><text x="6.3" y="10.5" text-anchor="middle" font-family="Liberation Sans" font-size="10.5" font-weight="bold" fill="#e8ece8">2</text></svg>
<div class="a" style="left:983.66px;top:633.84px;font-size:12px;line-height:16px;color:#bbbbbb;letter-spacing:-0.405px;">Event Log</div>
<svg class="r" style="left:3px;top:656px;" width="13" height="13" viewBox="0 0 13 13"><rect x="3.5" y="0.5" width="9" height="9" fill="none" stroke="#afb1b3"/><path d="M0.5 3 L0.5 12.5 L10 12.5" fill="none" stroke="#afb1b3"/></svg>
<div class="a" style="left:24.20px;top:653.00px;font-size:13px;line-height:17px;color:#bbbbbb;letter-spacing:-0.027px;">Localized IntelliJ IDEA 2021.3.3 is available // Switch and restart (8 minutes ago)</div>
<div class="a" style="left:827.76px;top:653.84px;font-size:12px;line-height:16px;color:#bbbbbb;letter-spacing:0.042px;">26:24</div>
<div class="a" style="left:870.56px;top:653.84px;font-size:12px;line-height:16px;color:#bbbbbb;letter-spacing:-1.200px;">CRLF</div>
<div class="a" style="left:910.66px;top:653.84px;font-size:12px;line-height:16px;color:#bbbbbb;letter-spacing:-0.274px;">UTF-8</div>
<div class="a" style="left:956.26px;top:653.84px;font-size:12px;line-height:16px;color:#bbbbbb;letter-spacing:0.338px;">4 spaces</div>
<svg class="r" style="left:1018px;top:655px;" width="13" height="13" viewBox="0 0 13 13"><path d="M1.8 5 L1.8 3.8 A2.6 2.6 0 0 1 7 3.8 L7 6" fill="none" stroke="#afb1b3" stroke-width="1.3"/><rect x="4.5" y="6" width="8" height="6.5" fill="#afb1b3"/></svg>
<svg class="r" style="left:1041px;top:654px;" width="18" height="17" viewBox="0 0 18 17"><path d="M1 9.5 Q1 7 4 5 L7 1.5 Q8.5 0 10 1.5 L13 5 Q16.5 7.5 16 10 Q15.5 11.2 13.5 11.2 L3 11.2 Q1 11.2 1 9.5Z" fill="#d9884a"/><rect x="7.8" y="2.2" width="1.7" height="4.5" fill="#3c3f41"/><rect x="7.8" y="7.6" width="1.7" height="1.7" fill="#3c3f41"/><path d="M13.5 8.6 L16.5 10.3 L16.5 13.7 L13.5 15.4 L10.5 13.7 L10.5 10.3Z" fill="#3c3f41" stroke="#3c3f41" stroke-width="1.5"/><path d="M13.5 9 L16.2 10.5 L16.2 13.5 L13.5 15 L10.8 13.5 L10.8 10.5Z" fill="none" stroke="#b8bab8" stroke-width="1.3"/></svg>
</body></html>
